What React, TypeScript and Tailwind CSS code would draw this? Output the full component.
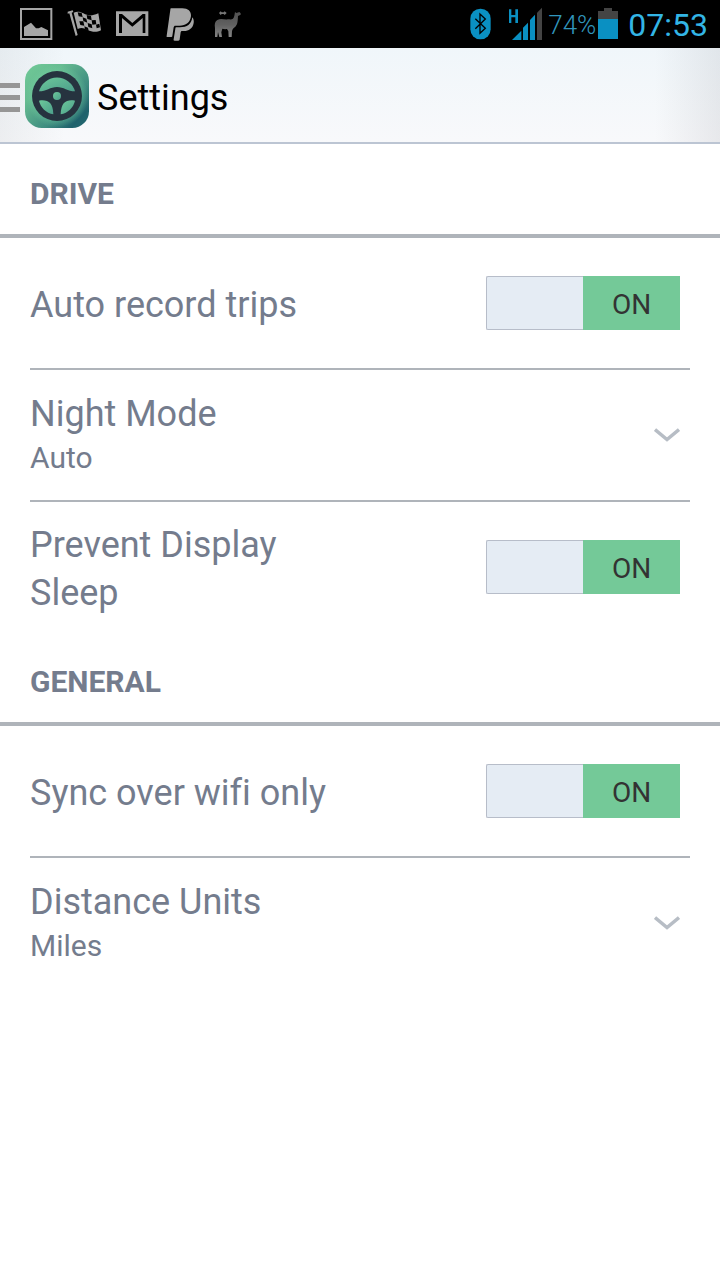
import { useState } from 'react';
import type { ReactNode } from 'react';

function NotificationIcons() {
  return (
    <div className="flex items-center text-[#a6a6a6]">
      {/* Picture */}
      <svg className="size-12" viewBox="36 0 144 144" fill="currentColor" aria-hidden="true">
        <path d="M60 24h97v96H60zM66 30v84h85V30z" fillRule="evenodd" />
        <path d="M72 108V81l21-13 15 17 8 0 8-4 20 10v17z" />
      </svg>
      {/* Chequered flag */}
      <svg className="size-12" viewBox="180 0 144 144" aria-hidden="true">
        <path d="M203 35l15-4 2 5-5 2 18 67-6 3-19-68-5 1z" fill="currentColor" />
        <path d="M221 38c11-5 20-3 29 2 15 8 25 9 45 0l8 51c-16 8-28 4-40-1-12-6-18-8-30-3z" fill="currentColor" />
        <path
          d="M233 37l12 2 3 12-12-2zM248 52l11 4 3 12-12-5zM260 45l13 3 2 13-13-4zM275 61l12-1 2 13-12 1zM238 64l12 0 3 13-12-2zM263 69l12 4 2 12-12-4zM253 79l11 4 2 9-11-4zM288 74l10-3 2 11-10 3z"
          fill="#000000"
        />
      </svg>
      {/* Mail */}
      <svg className="size-12" viewBox="324 0 144 144" aria-hidden="true">
        <path d="M348 34h97v74h-97z" fill="currentColor" />
        <path d="M357 99V42h9l31 27 31-27h8v57h-8V54l-31 26-31-26v45z" fill="#000000" />
      </svg>
      {/* PayPal */}
      <svg className="size-12" viewBox="468 0 144 144" fill="currentColor" aria-hidden="true">
        <path d="M514 25h33c17 0 27 9 26 23-2 20-16 29-34 29h-13c-3 0-4 2-5 5l-4 26c0 2-1 3-3 3h-11c-3 0-4-1-3-4l11-78c0-3 1-4 3-4z" />
        <path d="M577 52c4 5 5 11 4 17-3 17-15 24-29 24h-6c-2 0-3 1-4 4l-3 21c0 3-2 4-4 4h-11c-3 0-4-1-3-4l5-32c0-3 1-4 4-4h10c21 0 34-9 37-30z" />
      </svg>
      {/* Llama */}
      <svg className="size-12" viewBox="612 0 144 144" aria-hidden="true">
        <defs>
          <linearGradient id="llama" x1="0" y1="0" x2="0" y2="1">
            <stop offset="0" stopColor="#505050" />
            <stop offset="0.5" stopColor="#606060" />
            <stop offset="1" stopColor="#858585" />
          </linearGradient>
        </defs>
        <path
          d="M703 47L705 36L709 39L718 36L722 40L722 44L714 48C713 60 714 72 706 80C700 84 697 87 696 94L695 111H686L685 94L681 87C675 88 670 87 667 86L664 97L666 111H658L654 96L652 111H645L645 84C643 72 645 64 652 60C664 54 672 60 686 58C696 59 701 58 703 47Z"
          fill="url(#llama)"
        />
        <path d="M657 39l5-5 3 3h6l3-3 6 5-6 6-3-3h-6l-3 3z" fill="#777777" />
      </svg>
    </div>
  );
}

function StatusBar() {
  return (
    <div className="flex h-12 items-center justify-between bg-black px-3">
      <NotificationIcons />
      <div className="flex items-center">
        <svg className="mr-4 h-12 w-[22px]" viewBox="26 0 66 144" aria-hidden="true">
          <rect x="27" y="26" width="61" height="92" rx="30" fill="#0a90c2" />
          <path d="M42 56l30 29-16 15V42l16 15-30 29" fill="none" stroke="#000000" strokeWidth="4" />
        </svg>
        <svg className="mr-1.5 h-12 w-[34px]" viewBox="141 0 102 144" aria-hidden="true">
          <path d="M144 28h7v17h12V28h8v41h-8V52h-12v17h-7z" fill="#0a90c2" />
          <path d="M153 120l28-28v28zM186 120V83l15-15v52zM207 120V60l15-16v76z" fill="#0a90c2" />
          <path d="M228 120V38l15-15v97z" fill="#444444" />
        </svg>
        <span className="mr-0.5 pt-0.5 text-[26px] font-light leading-12 text-[#3195bc]">74%</span>
        <svg className="mr-2.5 h-12 w-5" viewBox="414 0 60 144" aria-hidden="true">
          <path d="M414 33h18v-9h24v9h18v24h-60z" fill="#444444" />
          <path d="M414 57h60v60h-60z" fill="#0a90c2" />
        </svg>
        <span className="pt-0.5 text-[32px] leading-12 text-[#33b5e5]">07:53</span>
      </div>
    </div>
  );
}

function WheelLogo() {
  return (
    <svg className="size-16" viewBox="0 0 192 192" aria-hidden="true">
      <defs>
        <linearGradient id="tile" x1="0" y1="0" x2="1" y2="1">
          <stop offset="0" stopColor="#70ca97" />
          <stop offset="0.3" stopColor="#66bb91" />
          <stop offset="0.65" stopColor="#3f8d80" />
          <stop offset="0.85" stopColor="#1f626c" />
          <stop offset="1" stopColor="#246b72" />
        </linearGradient>
        <radialGradient id="glow">
          <stop offset="0.75" stopColor="#79d6a5" stopOpacity="0.35" />
          <stop offset="1" stopColor="#79d6a5" stopOpacity="0" />
        </radialGradient>
        <linearGradient id="glass" x1="0" y1="0" x2="1" y2="1">
          <stop offset="0" stopColor="#6cc79a" />
          <stop offset="1" stopColor="#4c9f8b" />
        </linearGradient>
      </defs>
      <rect width="192" height="192" rx="50" fill="url(#tile)" />
      <circle cx="96" cy="96" r="94" fill="url(#glow)" />
      <circle cx="96" cy="96" r="75" fill="#26333f" />
      <g fill="url(#glass)">
        <path d="M42 82a56 56 0 0 1 108 0c-22 0-34-13-54-13s-32 13-54 13z" />
        <path d="M42 110c26-4 42 5 43 41-22-4-38-20-43-41z" />
        <path d="M150 110c-26-4-42 5-43 41 22-4 38-20 43-41z" />
        <circle cx="96" cy="96" r="12" />
      </g>
    </svg>
  );
}

function Header() {
  return (
    <header className="flex h-24 items-center border-b-2 border-[#bcc5d3] bg-[linear-gradient(to_right,rgba(120,125,130,0.09),transparent_9%,transparent_91%,rgba(120,120,130,0.13)),linear-gradient(to_bottom,#f0f6fa,#f8f9fb)] pt-0.5">
      <button type="button" aria-label="Menu" className="flex items-center gap-[5px]">
        <span className="flex flex-col gap-[7px] pt-0.5">
          <span className="h-[5px] w-5 bg-[#969696]" />
          <span className="h-[5px] w-5 bg-[#969696]" />
          <span className="h-[5px] w-5 bg-[#969696]" />
        </span>
        <WheelLogo />
      </button>
      <h1 className="ml-2 pt-1 text-4xl text-black">Settings</h1>
    </header>
  );
}

function Section({ title, children }: { title: string; children: ReactNode }) {
  return (
    <section>
      <h2 className="border-b-4 border-[#afb4ba] px-[30px] pt-[30px] pb-5 text-[30px] leading-10 font-bold text-[#747c8d]">
        {title}
      </h2>
      <div className="mx-[30px] divide-y-2 divide-[#afb4ba]">{children}</div>
    </section>
  );
}

function ToggleRow({ id, label }: { id: string; label: string }) {
  const [on, setOn] = useState(true);

  return (
    <div className="flex min-h-[132px] items-center justify-between pr-2.5 last:min-h-[130px]">
      <label htmlFor={id} className="w-1/2 pt-1 text-4xl leading-12">{label}</label>
      <label className="grid h-[54px] w-[194px] cursor-pointer grid-cols-2 text-[28px] leading-[50px] text-[#333333]">
        <input
          id={id}
          type="checkbox"
          role="switch"
          className="sr-only"
          checked={on}
          onChange={e => setOn(e.target.checked)}
        />
        {on ? (
          <>
            <span className="rounded-l-xs border border-r-0 border-[#b7bdc9] bg-[#e5ecf4]" />
            <span className="bg-[#74c998] pt-1 text-center">ON</span>
          </>
        ) : (
          <>
            <span className="bg-[#b7bdc9] pt-1 text-center">OFF</span>
            <span className="rounded-r-xs border border-l-0 border-[#b7bdc9] bg-[#e5ecf4]" />
          </>
        )}
      </label>
    </div>
  );
}

function SelectRow({ id, label, options }: { id: string; label: string; options: string[] }) {
  return (
    <div className="flex min-h-[132px] items-center justify-between pr-2.5 last:min-h-[130px]">
      <div className="flex grow flex-col pb-0.5">
        <label htmlFor={id} className="text-4xl leading-12">{label}</label>
        <select id={id} className="h-10 appearance-none bg-transparent text-[30px] leading-10">
          {options.map(o => (
            <option key={o}>{o}</option>
          ))}
        </select>
      </div>
      <svg className="h-4 w-[26px]" viewBox="0 0 26 16" fill="none" stroke="#b7bdc5" strokeWidth="3.5" aria-hidden="true">
        <path d="M1 2.5l12 10 12-10" />
      </svg>
    </div>
  );
}

export default function App() {
  return (
    <div className="min-h-screen bg-white font-[Roboto,sans-serif] text-[#747c8d] [font-variant-ligatures:none]">
      <StatusBar />
      <Header />
      <main>
        <Section title="DRIVE">
          <ToggleRow id="auto-record" label="Auto record trips" />
          <SelectRow id="night-mode" label="Night Mode" options={['Auto', 'On', 'Off']} />
          <ToggleRow id="prevent-sleep" label="Prevent Display Sleep" />
        </Section>
        <Section title="GENERAL">
          <ToggleRow id="wifi-only" label="Sync over wifi only" />
          <SelectRow id="distance-units" label="Distance Units" options={['Miles', 'Kilometers']} />
        </Section>
      </main>
    </div>
  );
}
